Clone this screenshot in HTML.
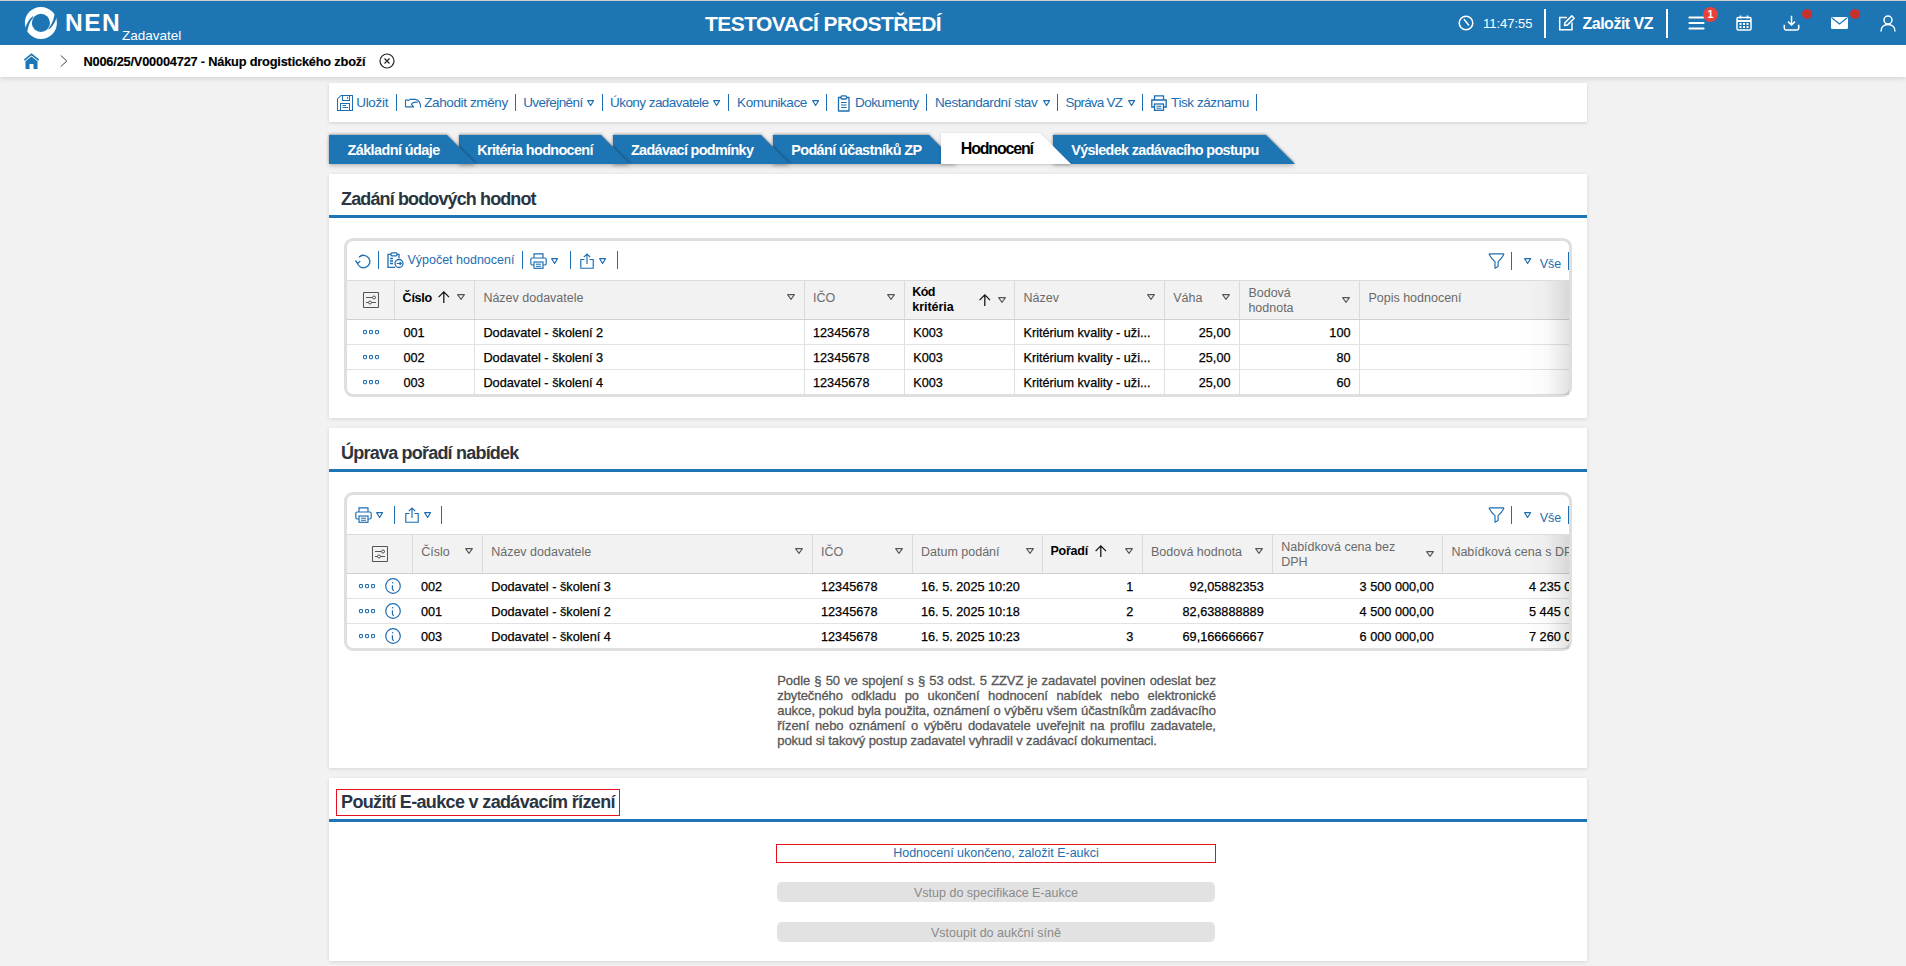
<!DOCTYPE html><html><head><meta charset="utf-8"><style>
html,body{margin:0;padding:0;}
body{width:1906px;height:966px;overflow:hidden;position:relative;background:#f2f2f2;font-family:"Liberation Sans", sans-serif;}
.t{position:absolute;white-space:nowrap;line-height:1;}
svg{overflow:visible}
</style></head><body>
<div style="position:absolute;left:0px;top:0px;width:1906px;height:1px;background:#cfcfcf"></div>
<div style="position:absolute;left:0px;top:1px;width:1906px;height:44px;background:#1e75b4"></div>
<svg style="position:absolute;left:20px;top:3px;" width="42" height="40" viewBox="0 0 42 40"><defs><mask id="m"><rect width="42" height="40" fill="#fff"/><circle cx="20.9" cy="19.9" r="9.1" fill="#000"/><path d="M12.8 13.3 Q7.5 17.5 5.2 25.3 L4.5 27.5 L7.2 28.5 L7.6 26.8 Q9 19.5 13.5 14.1Z" fill="#000"/><path d="M29 26.5 Q34.3 22.3 36.6 14.5 L37.3 12.3 L34.6 11.3 L34.2 13 Q32.8 20.3 28.3 25.7Z" fill="#000"/></mask></defs>
<circle cx="20.9" cy="19.9" r="16" fill="#fff" mask="url(#m)"/></svg>
<div class="t" style="left:65.0px;top:11.16px;font-size:24.5px;font-weight:700;color:#fff;letter-spacing:1.45px;">NEN</div>
<div class="t" style="left:122.0px;top:29.07px;font-size:13.5px;font-weight:400;color:#fff;letter-spacing:0px;">Zadavatel</div>
<div class="t" style="left:705.0px;top:12.72px;font-size:21px;font-weight:700;color:#fff;letter-spacing:-0.55px;">TESTOVACÍ PROSTŘEDÍ</div>
<svg style="position:absolute;left:1458px;top:15px;" width="16" height="16" viewBox="0 0 16 16"><circle cx="8" cy="8" r="6.8" fill="none" stroke="#fff" stroke-width="1.5"/><path d="M6.3 4.6L10.6 10" fill="none" stroke="#fff" stroke-width="1.5" stroke-linecap="round"/></svg>
<div class="t" style="left:1483.0px;top:16.80px;font-size:13px;font-weight:400;color:#fff;letter-spacing:-0.02px;">11:47:55</div>
<div style="position:absolute;left:1544px;top:9px;width:2px;height:29px;background:#fff"></div>
<svg style="position:absolute;left:1558px;top:15px;" width="17" height="16" viewBox="0 0 17 16"><path d="M9 2.5H1.7v12.3H14V7.5" fill="none" stroke="#fff" stroke-width="1.5"/><path d="M6.5 10.5l.4-2.8L13.8.9l2.4 2.4-6.9 6.8z" fill="none" stroke="#fff" stroke-width="1.5" stroke-linejoin="round"/></svg>
<div class="t" style="left:1582.5px;top:15.76px;font-size:16px;font-weight:700;color:#fff;letter-spacing:-0.5px;">Založit VZ</div>
<div style="position:absolute;left:1666px;top:9px;width:2px;height:29px;background:#fff"></div>
<svg style="position:absolute;left:1688px;top:16px;" width="17" height="14" viewBox="0 0 17 14"><g stroke="#fff" stroke-width="2.2" stroke-linecap="round"><path d="M1.5 1.5h14M1.5 7h14M1.5 12.5h14"/></g></svg>
<div style="position:absolute;left:1703px;top:7px;width:15px;height:15px;border-radius:50%;background:#e8413a;color:#fff;font-size:10.5px;font-weight:700;line-height:15px;text-align:center;font-family:&quot;Liberation Sans&quot;">1</div>
<svg style="position:absolute;left:1736px;top:15px;" width="16" height="16" viewBox="0 0 16 16"><rect x="1" y="2.5" width="14" height="12.5" rx="1.2" fill="none" stroke="#fff" stroke-width="1.5"/><path d="M1 6h14" stroke="#fff" stroke-width="2"/><path d="M4.5 0.5v3M11.5 0.5v3" stroke="#fff" stroke-width="1.5"/><g fill="#fff"><rect x="3.5" y="8" width="2" height="2"/><rect x="7" y="8" width="2" height="2"/><rect x="10.5" y="8" width="2" height="2"/><rect x="3.5" y="11" width="2" height="2"/><rect x="7" y="11" width="2" height="2"/><rect x="10.5" y="11" width="2" height="2"/></g></svg>
<svg style="position:absolute;left:1783px;top:15px;" width="17" height="16" viewBox="0 0 17 16"><path d="M1.3 9.8v3.4q0 1.7 1.7 1.7h11q1.7 0 1.7-1.7V9.8" fill="none" stroke="#fff" stroke-width="1.5"/><path d="M8.5 0.8v9M5 6.6l3.5 3.4L12 6.6" fill="none" stroke="#fff" stroke-width="1.5"/></svg>
<div style="position:absolute;left:1802px;top:9px;width:10px;height:10px;border-radius:50%;background:#c9302c"></div>
<svg style="position:absolute;left:1831px;top:17px;" width="17" height="12" viewBox="0 0 17 12"><rect x="0" y="0" width="17" height="12" rx="1.5" fill="#fff"/><path d="M1 1l7.5 6L16 1" fill="none" stroke="#1e75b4" stroke-width="1.3"/></svg>
<div style="position:absolute;left:1850px;top:9px;width:10px;height:10px;border-radius:50%;background:#c9302c"></div>
<svg style="position:absolute;left:1880px;top:15px;" width="16" height="17" viewBox="0 0 16 17"><circle cx="8" cy="5" r="4" fill="none" stroke="#fff" stroke-width="1.5"/><path d="M1 16.5c0-4.3 3-7 7-7s7 2.7 7 7" fill="none" stroke="#fff" stroke-width="1.5"/></svg>
<div style="position:absolute;left:0px;top:45px;width:1906px;height:32px;background:#fff;box-shadow:0 2px 5px rgba(0,0,0,0.12)"></div>
<svg style="position:absolute;left:23px;top:53px;" width="17" height="16" viewBox="0 0 17 16"><path d="M1.3 7.2L8.5 1.3l7.2 5.9" fill="none" stroke="#1e75b4" stroke-width="1.6"/><path d="M2.5 8.3L8.5 3.6l6 4.7V16H10.5v-5H6.5v5H2.5z" fill="#1e75b4"/></svg>
<svg style="position:absolute;left:60px;top:55px;" width="8" height="12" viewBox="0 0 8 12"><path d="M0.8 0.5L6.8 6 0.8 11.5" fill="none" stroke="#444" stroke-width="1"/></svg>
<div class="t" style="left:83.5px;top:55.66px;font-size:12.8px;font-weight:700;color:#000;letter-spacing:-0.202px;-webkit-text-stroke:0.15px #000">N006/25/V00004727 - Nákup drogistického zboží</div>
<svg style="position:absolute;left:379px;top:53px;" width="16" height="16" viewBox="0 0 16 16"><circle cx="8" cy="8" r="7" fill="none" stroke="#222" stroke-width="1.2"/><path d="M5.5 5.5l5 5M10.5 5.5l-5 5" stroke="#222" stroke-width="1.2"/></svg>
<div style="position:absolute;left:329px;top:83px;width:1258px;height:39px;background:#fff;box-shadow:0 1px 3px rgba(0,0,0,0.15)"></div>
<svg style="position:absolute;left:337px;top:95px;" width="16" height="16" viewBox="0 0 16 16"><g fill="none" stroke="#1d6db0" stroke-width="1.05" stroke-linejoin="round"><path d="M0.5 4L4 0.5H15.5V15.5H0.5Z"/><path d="M5.5 0.5V5.5H12.5V0.5"/><path d="M10.5 1.8V3.6"/><path d="M3.5 15.5V8.5H12.5V15.5"/><path d="M5.5 10.5H9M5.5 12.5H11"/></g></svg>
<div class="t" style="left:356.2px;top:95.87px;font-size:13.5px;font-weight:400;color:#1d6db0;letter-spacing:-0.293px;">Uložit</div>
<div style="position:absolute;left:396px;top:94px;width:1px;height:17px;background:#1d6db0"></div>
<svg style="position:absolute;left:400px;top:92px;" width="24" height="22" viewBox="0 0 24 22"><path d="M5.6 7.4 L8.2 8.6 L9.8 7.4 H15.5 C18.6 7.9 20.6 11.3 20.6 15.6 M17.8 10.3 C16 10.1 14.2 10.2 13 10.7 L11.4 12.4 L13.6 14.9 H6.2 Q5.5 14.9 5.5 14.2 V7.9" fill="none" stroke="#1d6db0" stroke-width="1.15" stroke-linejoin="round"/></svg>
<div class="t" style="left:424.2px;top:95.87px;font-size:13.5px;font-weight:400;color:#1d6db0;letter-spacing:-0.379px;">Zahodit změny</div>
<div style="position:absolute;left:515px;top:94px;width:1px;height:17px;background:#1d6db0"></div>
<div class="t" style="left:523.2px;top:95.87px;font-size:13.5px;font-weight:400;color:#1d6db0;letter-spacing:-0.589px;">Uveřejnění</div>
<svg style="position:absolute;left:587px;top:99.8px;" width="7.2" height="6.2" viewBox="0 0 7.2 6.2"><path d="M0.6 0.6H6.6000000000000005L3.6 5.6000000000000005z" fill="none" stroke="#1d6db0" stroke-width="1.1" stroke-linejoin="round"/></svg>
<div style="position:absolute;left:602px;top:94px;width:1px;height:17px;background:#1d6db0"></div>
<div class="t" style="left:610.0px;top:95.87px;font-size:13.5px;font-weight:400;color:#1d6db0;letter-spacing:-0.555px;">Úkony zadavatele</div>
<svg style="position:absolute;left:713px;top:99.8px;" width="7.2" height="6.2" viewBox="0 0 7.2 6.2"><path d="M0.6 0.6H6.6000000000000005L3.6 5.6000000000000005z" fill="none" stroke="#1d6db0" stroke-width="1.1" stroke-linejoin="round"/></svg>
<div style="position:absolute;left:728px;top:94px;width:1px;height:17px;background:#1d6db0"></div>
<div class="t" style="left:737.1px;top:95.87px;font-size:13.5px;font-weight:400;color:#1d6db0;letter-spacing:-0.466px;">Komunikace</div>
<svg style="position:absolute;left:811.7px;top:99.8px;" width="7.2" height="6.2" viewBox="0 0 7.2 6.2"><path d="M0.6 0.6H6.6000000000000005L3.6 5.6000000000000005z" fill="none" stroke="#1d6db0" stroke-width="1.1" stroke-linejoin="round"/></svg>
<div style="position:absolute;left:826px;top:94px;width:1px;height:17px;background:#1d6db0"></div>
<svg style="position:absolute;left:837px;top:95px;" width="14" height="17" viewBox="0 0 14 17"><path d="M4 2.5H1.5v13.5h10.5v-13.5H9.5" fill="none" stroke="#1d6db0" stroke-width="1.3" stroke-linejoin="round"/><rect x="4" y="0.8" width="5.5" height="3.2" rx="1" fill="none" stroke="#1d6db0" stroke-width="1.3"/><path d="M4 7.5h5.5M4 10h5.5M4 12.5h5.5" stroke="#1d6db0" stroke-width="1.2"/></svg>
<div class="t" style="left:854.9px;top:95.87px;font-size:13.5px;font-weight:400;color:#1d6db0;letter-spacing:-0.51px;">Dokumenty</div>
<div style="position:absolute;left:926px;top:94px;width:1px;height:17px;background:#1d6db0"></div>
<div class="t" style="left:935.0px;top:95.87px;font-size:13.5px;font-weight:400;color:#1d6db0;letter-spacing:-0.429px;">Nestandardní stav</div>
<svg style="position:absolute;left:1042.6px;top:99.8px;" width="7.2" height="6.2" viewBox="0 0 7.2 6.2"><path d="M0.6 0.6H6.6000000000000005L3.6 5.6000000000000005z" fill="none" stroke="#1d6db0" stroke-width="1.1" stroke-linejoin="round"/></svg>
<div style="position:absolute;left:1057px;top:94px;width:1px;height:17px;background:#1d6db0"></div>
<div class="t" style="left:1065.6px;top:95.87px;font-size:13.5px;font-weight:400;color:#1d6db0;letter-spacing:-0.81px;">Správa VZ</div>
<svg style="position:absolute;left:1127.5px;top:99.8px;" width="7.2" height="6.2" viewBox="0 0 7.2 6.2"><path d="M0.6 0.6H6.6000000000000005L3.6 5.6000000000000005z" fill="none" stroke="#1d6db0" stroke-width="1.1" stroke-linejoin="round"/></svg>
<div style="position:absolute;left:1142px;top:94px;width:1px;height:17px;background:#1d6db0"></div>
<svg style="position:absolute;left:1151px;top:95px;" width="16" height="16" viewBox="0 0 16 16"><path d="M3.5 5V0.8h9V5M3.5 12H0.8V5h14.4v7h-2.7" fill="none" stroke="#1d6db0" stroke-width="1.3"/><rect x="3.5" y="9" width="9" height="6.3" fill="#fff" stroke="#1d6db0" stroke-width="1.3"/><path d="M5.5 11.2h5M5.5 13.3h5" stroke="#1d6db0" stroke-width="1.1"/></svg>
<div class="t" style="left:1171.1px;top:95.87px;font-size:13.5px;font-weight:400;color:#1d6db0;letter-spacing:-0.426px;">Tisk záznamu</div>
<div style="position:absolute;left:1256px;top:94px;width:1px;height:17px;background:#1d6db0"></div>
<svg style="position:absolute;left:329px;top:134px;z-index:20;filter:drop-shadow(0.5px 2px 2px rgba(0,0,0,0.18)) drop-shadow(0 -1px 0.8px rgba(0,0,0,0.3))" width="149" height="31"><path d="M0 1H118L147 30H0z" fill="#1e75b4"/></svg>
<div class="t" style="left:347.5px;top:142.61px;font-size:14.4px;font-weight:700;color:#fff;letter-spacing:-0.559px;z-index:30">Základní údaje</div>
<svg style="position:absolute;left:459px;top:134px;z-index:19;filter:drop-shadow(0.5px 2px 2px rgba(0,0,0,0.18)) drop-shadow(0 -1px 0.8px rgba(0,0,0,0.3))" width="173" height="31"><path d="M0 1H142L171 30H0z" fill="#1e75b4"/></svg>
<div class="t" style="left:477.2px;top:142.61px;font-size:14.4px;font-weight:700;color:#fff;letter-spacing:-0.638px;z-index:30">Kritéria hodnocení</div>
<svg style="position:absolute;left:613px;top:134px;z-index:18;filter:drop-shadow(0.5px 2px 2px rgba(0,0,0,0.18)) drop-shadow(0 -1px 0.8px rgba(0,0,0,0.3))" width="179" height="31"><path d="M0 1H148L177 30H0z" fill="#1e75b4"/></svg>
<div class="t" style="left:631.0px;top:142.61px;font-size:14.4px;font-weight:700;color:#fff;letter-spacing:-0.666px;z-index:30">Zadávací podmínky</div>
<svg style="position:absolute;left:773px;top:134px;z-index:17;filter:drop-shadow(0.5px 2px 2px rgba(0,0,0,0.18)) drop-shadow(0 -1px 0.8px rgba(0,0,0,0.3))" width="187" height="31"><path d="M0 1H156L185 30H0z" fill="#1e75b4"/></svg>
<div class="t" style="left:791.2px;top:142.61px;font-size:14.4px;font-weight:700;color:#fff;letter-spacing:-0.586px;z-index:30">Podání účastníků ZP</div>
<svg style="position:absolute;left:1053px;top:134px;z-index:15;filter:drop-shadow(0.5px 2px 2px rgba(0,0,0,0.18)) drop-shadow(0 -1px 0.8px rgba(0,0,0,0.3))" width="244" height="31"><path d="M0 1H213L242 30H0z" fill="#1e75b4"/></svg>
<div class="t" style="left:1071.2px;top:142.61px;font-size:14.4px;font-weight:700;color:#fff;letter-spacing:-0.644px;z-index:30">Výsledek zadávacího postupu</div>
<svg style="position:absolute;left:941px;top:133px;z-index:25;filter:drop-shadow(0.5px 1px 1.5px rgba(0,0,0,0.18))" width="132" height="32"><path d="M0 0H99L130 31H0z" fill="#fff"/></svg>
<div class="t" style="left:960.8px;top:140.56px;font-size:16px;font-weight:700;color:#000;letter-spacing:-1.184px;z-index:30">Hodnocení</div>
<div style="position:absolute;left:329px;top:174px;width:1258px;height:244px;background:#fff;box-shadow:0 1px 4px rgba(0,0,0,0.12)"></div>
<div class="t" style="left:341.1px;top:189.56px;font-size:18px;font-weight:700;color:#2b3441;letter-spacing:-0.881px;">Zadání bodových hodnot</div>
<div style="position:absolute;left:329px;top:215px;width:1258px;height:3px;background:#1e75b4"></div>
<div style="position:absolute;left:329px;top:428px;width:1258px;height:340px;background:#fff;box-shadow:0 1px 4px rgba(0,0,0,0.12)"></div>
<div class="t" style="left:341.1px;top:443.56px;font-size:18px;font-weight:700;color:#2b3441;letter-spacing:-0.793px;">Úprava pořadí nabídek</div>
<div style="position:absolute;left:329px;top:469px;width:1258px;height:3px;background:#1e75b4"></div>
<div style="position:absolute;left:329px;top:778px;width:1258px;height:183px;background:#fff;box-shadow:0 1px 4px rgba(0,0,0,0.12)"></div>
<div class="t" style="left:341.1px;top:793.46px;font-size:18px;font-weight:700;color:#2b3441;letter-spacing:-0.658px;">Použití E-aukce v zadávacím řízení</div>
<div style="position:absolute;left:329px;top:819px;width:1258px;height:3px;background:#1e75b4"></div>
<div style="position:absolute;left:336px;top:789px;width:284px;height:27px;border:1px solid #e8101e;box-sizing:border-box"></div>
<div style="position:absolute;left:344px;top:238px;width:1228px;height:159px;border:3px solid #dedfe0;border-radius:9px;box-sizing:border-box;background:#fff"></div>
<svg style="position:absolute;left:355px;top:254px;" width="17" height="15" viewBox="0 0 17 15"><path d="M4 3.2A6.3 6.3 0 1 1 2.3 8.5" fill="none" stroke="#1d6db0" stroke-width="1.3"/><path d="M0.5 6.5l2 2.8 2.8-2" fill="none" stroke="#1d6db0" stroke-width="1.3"/></svg>
<div style="position:absolute;left:378px;top:251px;width:1px;height:18px;background:#1d6db0"></div>
<svg style="position:absolute;left:387px;top:252px;" width="17" height="16" viewBox="0 0 17 16"><path d="M4 2.3H1v13h7" fill="none" stroke="#1d6db0" stroke-width="1.3"/><path d="M10 2.3h2v4" fill="none" stroke="#1d6db0" stroke-width="1.3"/><rect x="4" y="0.8" width="6" height="3" rx="1" fill="none" stroke="#1d6db0" stroke-width="1.3"/><path d="M3 6.5h3M3 9h3M3 11.5h3" stroke="#1d6db0" stroke-width="1.4"/><circle cx="12" cy="11.5" r="4" fill="#fff" stroke="#1d6db0" stroke-width="1.3"/><path d="M9.8 11.5h4.4M12.6 9.8l1.7 1.7-1.7 1.7" fill="none" stroke="#1d6db0" stroke-width="1.1"/></svg>
<div class="t" style="left:407.4px;top:254.42px;font-size:12.5px;font-weight:400;color:#1d6db0;letter-spacing:0px;">Výpočet hodnocení</div>
<div style="position:absolute;left:522px;top:251px;width:1px;height:18px;background:#1d6db0"></div>
<svg style="position:absolute;left:530px;top:253px;" width="17" height="16" viewBox="0 0 17 16"><path d="M4 5V0.8h9V5M4 12H2.2Q0.8 12 0.8 10.6V6.4Q0.8 5 2.2 5h12.6q1.4 0 1.4 1.4v4.2q0 1.4-1.4 1.4H13" fill="none" stroke="#1d6db0" stroke-width="1.15"/><rect x="4" y="9" width="9" height="6.3" fill="#fff" stroke="#1d6db0" stroke-width="1.15"/><path d="M6 11.2h5M6 13.3h5" stroke="#1d6db0" stroke-width="1"/></svg>
<svg style="position:absolute;left:551px;top:257.5px;" width="7.2" height="6.2" viewBox="0 0 7.2 6.2"><path d="M0.6 0.6H6.6000000000000005L3.6 5.6000000000000005z" fill="none" stroke="#1d6db0" stroke-width="1.1" stroke-linejoin="round"/></svg>
<div style="position:absolute;left:570px;top:251px;width:1px;height:18px;background:#1d6db0"></div>
<svg style="position:absolute;left:580px;top:252.5px;" width="14" height="16" viewBox="0 0 14 16"><path d="M4.5 6.5H0.8v8.7h12.4V6.5H9.5" fill="none" stroke="#1d6db0" stroke-width="1.15"/><path d="M7 11V1M3.8 4.2L7 1l3.2 3.2" fill="none" stroke="#1d6db0" stroke-width="1.15"/></svg>
<svg style="position:absolute;left:599px;top:257.5px;" width="7.2" height="6.2" viewBox="0 0 7.2 6.2"><path d="M0.6 0.6H6.6000000000000005L3.6 5.6000000000000005z" fill="none" stroke="#1d6db0" stroke-width="1.1" stroke-linejoin="round"/></svg>
<div style="position:absolute;left:617px;top:251px;width:1px;height:18px;background:#1d6db0"></div>
<svg style="position:absolute;left:1488px;top:252.5px;" width="17" height="16" viewBox="0 0 17 16"><path d="M1.2 1.6Q1.2 0.8 2 0.8H15Q15.8 0.8 15.8 1.6Q13.8 5.6 10.1 8.6V13.6L7 15.2V8.6Q3.2 5.6 1.2 1.6Z" fill="none" stroke="#1d6db0" stroke-width="1.15" stroke-linejoin="round"/></svg>
<div style="position:absolute;left:1511px;top:252px;width:1px;height:18px;background:#1d6db0"></div>
<svg style="position:absolute;left:1524px;top:257.7px;" width="7.2" height="6.2" viewBox="0 0 7.2 6.2"><path d="M0.6 0.6H6.6000000000000005L3.6 5.6000000000000005z" fill="none" stroke="#1d6db0" stroke-width="1.1" stroke-linejoin="round"/></svg>
<div class="t" style="left:1539.7px;top:258.42px;font-size:12.5px;font-weight:400;color:#1d6db0;letter-spacing:0px;">Vše</div>
<div style="position:absolute;left:1568px;top:252px;width:1px;height:18px;background:#1d6db0"></div>
<div style="position:absolute;left:347px;top:280px;width:1222px;height:1px;background:#dcdcdc"></div>
<div style="position:absolute;left:347px;top:281px;width:1222px;height:38px;background:#f2f2f2"></div>
<div style="position:absolute;left:347px;top:319px;width:1222px;height:1px;background:#d0d0d0"></div>
<div style="position:absolute;left:394px;top:281px;width:1px;height:38px;background:#dadada"></div>
<div style="position:absolute;left:474px;top:281px;width:1px;height:38px;background:#dadada"></div>
<div style="position:absolute;left:474px;top:320px;width:1px;height:75px;background:#e0e0e0"></div>
<div style="position:absolute;left:804px;top:281px;width:1px;height:38px;background:#dadada"></div>
<div style="position:absolute;left:804px;top:320px;width:1px;height:75px;background:#e0e0e0"></div>
<div style="position:absolute;left:904px;top:281px;width:1px;height:38px;background:#dadada"></div>
<div style="position:absolute;left:904px;top:320px;width:1px;height:75px;background:#e0e0e0"></div>
<div style="position:absolute;left:1014px;top:281px;width:1px;height:38px;background:#dadada"></div>
<div style="position:absolute;left:1014px;top:320px;width:1px;height:75px;background:#e0e0e0"></div>
<div style="position:absolute;left:1164px;top:281px;width:1px;height:38px;background:#dadada"></div>
<div style="position:absolute;left:1164px;top:320px;width:1px;height:75px;background:#e0e0e0"></div>
<div style="position:absolute;left:1239px;top:281px;width:1px;height:38px;background:#dadada"></div>
<div style="position:absolute;left:1239px;top:320px;width:1px;height:75px;background:#e0e0e0"></div>
<div style="position:absolute;left:1359px;top:281px;width:1px;height:38px;background:#dadada"></div>
<div style="position:absolute;left:1359px;top:320px;width:1px;height:75px;background:#e0e0e0"></div>
<div style="position:absolute;left:347px;top:344px;width:1222px;height:1px;background:#e2e2e2"></div>
<div style="position:absolute;left:347px;top:369px;width:1222px;height:1px;background:#e2e2e2"></div>
<svg style="position:absolute;left:363px;top:292px;" width="16" height="16" viewBox="0 0 16 16"><rect x="0.5" y="0.5" width="15" height="15" rx="0.6" fill="none" stroke="#555" stroke-width="1.05"/><path d="M3 5.5H9.5M12.5 5.5H13M3 10.5H5.5M8.5 10.5H13" stroke="#555" stroke-width="1"/><circle cx="11" cy="5.5" r="1.5" fill="none" stroke="#555" stroke-width="1"/><circle cx="7" cy="10.5" r="1.5" fill="none" stroke="#555" stroke-width="1"/></svg>
<div class="t" style="left:402.6px;top:292.32px;font-size:12.5px;font-weight:700;color:#000;letter-spacing:-0.241px;">Číslo</div>
<svg style="position:absolute;left:437.5px;top:291px;" width="12" height="12" viewBox="0 0 12 12"><path d="M5.8 12V0.9M0.6 6.1l5.2-5.2 5.2 5.2" fill="none" stroke="#111" stroke-width="1.25"/></svg>
<svg style="position:absolute;left:457px;top:294px;" width="8" height="6" viewBox="0 0 8 6"><path d="M0.6 0.6H7.4L4 5.4z" fill="none" stroke="#555" stroke-width="1.05" stroke-linejoin="round"/></svg>
<div class="t" style="left:483.4px;top:291.62px;font-size:12.5px;font-weight:400;color:#6a6a6a;letter-spacing:0px;">Název dodavatele</div>
<svg style="position:absolute;left:787px;top:294px;" width="8" height="6" viewBox="0 0 8 6"><path d="M0.6 0.6H7.4L4 5.4z" fill="none" stroke="#555" stroke-width="1.05" stroke-linejoin="round"/></svg>
<div class="t" style="left:813.0px;top:291.62px;font-size:12.5px;font-weight:400;color:#6a6a6a;letter-spacing:0px;">IČO</div>
<svg style="position:absolute;left:887px;top:294px;" width="8" height="6" viewBox="0 0 8 6"><path d="M0.6 0.6H7.4L4 5.4z" fill="none" stroke="#555" stroke-width="1.05" stroke-linejoin="round"/></svg>
<div class="t" style="left:912.3px;top:286.42px;font-size:12.5px;font-weight:700;color:#000;letter-spacing:-0.556px;">Kód</div>
<div class="t" style="left:912.3px;top:301.42px;font-size:12.5px;font-weight:700;color:#000;letter-spacing:-0.043px;">kritéria</div>
<svg style="position:absolute;left:979.4px;top:293.8px;" width="12" height="12" viewBox="0 0 12 12"><path d="M5.8 12V0.9M0.6 6.1l5.2-5.2 5.2 5.2" fill="none" stroke="#111" stroke-width="1.25"/></svg>
<svg style="position:absolute;left:997.9px;top:297.1px;" width="8" height="6" viewBox="0 0 8 6"><path d="M0.6 0.6H7.4L4 5.4z" fill="none" stroke="#555" stroke-width="1.05" stroke-linejoin="round"/></svg>
<div class="t" style="left:1023.5px;top:291.62px;font-size:12.5px;font-weight:400;color:#6a6a6a;letter-spacing:0px;">Název</div>
<svg style="position:absolute;left:1147px;top:294px;" width="8" height="6" viewBox="0 0 8 6"><path d="M0.6 0.6H7.4L4 5.4z" fill="none" stroke="#555" stroke-width="1.05" stroke-linejoin="round"/></svg>
<div class="t" style="left:1173.2px;top:291.62px;font-size:12.5px;font-weight:400;color:#6a6a6a;letter-spacing:0px;">Váha</div>
<svg style="position:absolute;left:1222px;top:294px;" width="8" height="6" viewBox="0 0 8 6"><path d="M0.6 0.6H7.4L4 5.4z" fill="none" stroke="#555" stroke-width="1.05" stroke-linejoin="round"/></svg>
<div class="t" style="left:1248.4px;top:287.42px;font-size:12.5px;font-weight:400;color:#6a6a6a;letter-spacing:0px;">Bodová</div>
<div class="t" style="left:1248.4px;top:302.42px;font-size:12.5px;font-weight:400;color:#6a6a6a;letter-spacing:0px;">hodnota</div>
<svg style="position:absolute;left:1342.4px;top:297px;" width="8" height="6" viewBox="0 0 8 6"><path d="M0.6 0.6H7.4L4 5.4z" fill="none" stroke="#555" stroke-width="1.05" stroke-linejoin="round"/></svg>
<div class="t" style="left:1368.4px;top:291.62px;font-size:12.5px;font-weight:400;color:#6a6a6a;letter-spacing:0px;">Popis hodnocení</div>
<svg style="position:absolute;left:363px;top:330px;" width="17" height="5" viewBox="0 0 17 5"><rect x="0.5" y="0.5" width="3" height="3.2" rx="0.9" fill="none" stroke="#1d6db0" stroke-width="1.05"/><rect x="6.5" y="0.5" width="3" height="3.2" rx="0.9" fill="none" stroke="#1d6db0" stroke-width="1.05"/><rect x="12.5" y="0.5" width="3" height="3.2" rx="0.9" fill="none" stroke="#1d6db0" stroke-width="1.05"/></svg>
<div class="t" style="left:403.4px;top:326.65px;font-size:12.7px;font-weight:400;color:#000;letter-spacing:0px;-webkit-text-stroke:0.25px #000">001</div>
<div class="t" style="left:483.4px;top:326.61px;font-size:12.75px;font-weight:400;color:#000;letter-spacing:0px;-webkit-text-stroke:0.25px #000">Dodavatel - školení 2</div>
<div class="t" style="left:813.0px;top:326.65px;font-size:12.7px;font-weight:400;color:#000;letter-spacing:0px;-webkit-text-stroke:0.25px #000">12345678</div>
<div class="t" style="left:913.3px;top:326.65px;font-size:12.7px;font-weight:400;color:#000;letter-spacing:0px;-webkit-text-stroke:0.25px #000">K003</div>
<div class="t" style="left:1023.5px;top:326.71px;font-size:12.63px;font-weight:400;color:#000;letter-spacing:0px;-webkit-text-stroke:0.25px #000">Kritérium kvality - uži...</div>
<div class="t" style="right:675.5px;top:326.65px;font-size:12.7px;font-weight:400;color:#000;letter-spacing:0px;-webkit-text-stroke:0.25px #000">25,00</div>
<div class="t" style="right:555.5px;top:326.65px;font-size:12.7px;font-weight:400;color:#000;letter-spacing:0px;-webkit-text-stroke:0.25px #000">100</div>
<svg style="position:absolute;left:363px;top:355px;" width="17" height="5" viewBox="0 0 17 5"><rect x="0.5" y="0.5" width="3" height="3.2" rx="0.9" fill="none" stroke="#1d6db0" stroke-width="1.05"/><rect x="6.5" y="0.5" width="3" height="3.2" rx="0.9" fill="none" stroke="#1d6db0" stroke-width="1.05"/><rect x="12.5" y="0.5" width="3" height="3.2" rx="0.9" fill="none" stroke="#1d6db0" stroke-width="1.05"/></svg>
<div class="t" style="left:403.4px;top:351.65px;font-size:12.7px;font-weight:400;color:#000;letter-spacing:0px;-webkit-text-stroke:0.25px #000">002</div>
<div class="t" style="left:483.4px;top:351.61px;font-size:12.75px;font-weight:400;color:#000;letter-spacing:0px;-webkit-text-stroke:0.25px #000">Dodavatel - školení 3</div>
<div class="t" style="left:813.0px;top:351.65px;font-size:12.7px;font-weight:400;color:#000;letter-spacing:0px;-webkit-text-stroke:0.25px #000">12345678</div>
<div class="t" style="left:913.3px;top:351.65px;font-size:12.7px;font-weight:400;color:#000;letter-spacing:0px;-webkit-text-stroke:0.25px #000">K003</div>
<div class="t" style="left:1023.5px;top:351.71px;font-size:12.63px;font-weight:400;color:#000;letter-spacing:0px;-webkit-text-stroke:0.25px #000">Kritérium kvality - uži...</div>
<div class="t" style="right:675.5px;top:351.65px;font-size:12.7px;font-weight:400;color:#000;letter-spacing:0px;-webkit-text-stroke:0.25px #000">25,00</div>
<div class="t" style="right:555.5px;top:351.65px;font-size:12.7px;font-weight:400;color:#000;letter-spacing:0px;-webkit-text-stroke:0.25px #000">80</div>
<svg style="position:absolute;left:363px;top:380px;" width="17" height="5" viewBox="0 0 17 5"><rect x="0.5" y="0.5" width="3" height="3.2" rx="0.9" fill="none" stroke="#1d6db0" stroke-width="1.05"/><rect x="6.5" y="0.5" width="3" height="3.2" rx="0.9" fill="none" stroke="#1d6db0" stroke-width="1.05"/><rect x="12.5" y="0.5" width="3" height="3.2" rx="0.9" fill="none" stroke="#1d6db0" stroke-width="1.05"/></svg>
<div class="t" style="left:403.4px;top:376.65px;font-size:12.7px;font-weight:400;color:#000;letter-spacing:0px;-webkit-text-stroke:0.25px #000">003</div>
<div class="t" style="left:483.4px;top:376.61px;font-size:12.75px;font-weight:400;color:#000;letter-spacing:0px;-webkit-text-stroke:0.25px #000">Dodavatel - školení 4</div>
<div class="t" style="left:813.0px;top:376.65px;font-size:12.7px;font-weight:400;color:#000;letter-spacing:0px;-webkit-text-stroke:0.25px #000">12345678</div>
<div class="t" style="left:913.3px;top:376.65px;font-size:12.7px;font-weight:400;color:#000;letter-spacing:0px;-webkit-text-stroke:0.25px #000">K003</div>
<div class="t" style="left:1023.5px;top:376.71px;font-size:12.63px;font-weight:400;color:#000;letter-spacing:0px;-webkit-text-stroke:0.25px #000">Kritérium kvality - uži...</div>
<div class="t" style="right:675.5px;top:376.65px;font-size:12.7px;font-weight:400;color:#000;letter-spacing:0px;-webkit-text-stroke:0.25px #000">25,00</div>
<div class="t" style="right:555.5px;top:376.65px;font-size:12.7px;font-weight:400;color:#000;letter-spacing:0px;-webkit-text-stroke:0.25px #000">60</div>
<div style="position:absolute;left:1523px;top:281px;width:46px;height:114px;background:linear-gradient(to right, rgba(0,0,0,0), rgba(0,0,0,0.02) 50%, rgba(0,0,0,0.11))"></div>
<div style="position:absolute;left:344px;top:492px;width:1228px;height:159px;border:3px solid #dedfe0;border-radius:9px;box-sizing:border-box;background:#fff"></div>
<svg style="position:absolute;left:355px;top:507px;" width="17" height="16" viewBox="0 0 17 16"><path d="M4 5V0.8h9V5M4 12H2.2Q0.8 12 0.8 10.6V6.4Q0.8 5 2.2 5h12.6q1.4 0 1.4 1.4v4.2q0 1.4-1.4 1.4H13" fill="none" stroke="#1d6db0" stroke-width="1.15"/><rect x="4" y="9" width="9" height="6.3" fill="#fff" stroke="#1d6db0" stroke-width="1.15"/><path d="M6 11.2h5M6 13.3h5" stroke="#1d6db0" stroke-width="1"/></svg>
<svg style="position:absolute;left:375.5px;top:511.5px;" width="7.2" height="6.2" viewBox="0 0 7.2 6.2"><path d="M0.6 0.6H6.6000000000000005L3.6 5.6000000000000005z" fill="none" stroke="#1d6db0" stroke-width="1.1" stroke-linejoin="round"/></svg>
<div style="position:absolute;left:394px;top:506px;width:1px;height:18px;background:#1d6db0"></div>
<svg style="position:absolute;left:404.5px;top:507px;" width="14" height="16" viewBox="0 0 14 16"><path d="M4.5 6.5H0.8v8.7h12.4V6.5H9.5" fill="none" stroke="#1d6db0" stroke-width="1.15"/><path d="M7 11V1M3.8 4.2L7 1l3.2 3.2" fill="none" stroke="#1d6db0" stroke-width="1.15"/></svg>
<svg style="position:absolute;left:423.5px;top:511.5px;" width="7.2" height="6.2" viewBox="0 0 7.2 6.2"><path d="M0.6 0.6H6.6000000000000005L3.6 5.6000000000000005z" fill="none" stroke="#1d6db0" stroke-width="1.1" stroke-linejoin="round"/></svg>
<div style="position:absolute;left:441px;top:506px;width:1px;height:18px;background:#1d6db0"></div>
<svg style="position:absolute;left:1488px;top:506.5px;" width="17" height="16" viewBox="0 0 17 16"><path d="M1.2 1.6Q1.2 0.8 2 0.8H15Q15.8 0.8 15.8 1.6Q13.8 5.6 10.1 8.6V13.6L7 15.2V8.6Q3.2 5.6 1.2 1.6Z" fill="none" stroke="#1d6db0" stroke-width="1.15" stroke-linejoin="round"/></svg>
<div style="position:absolute;left:1511px;top:506px;width:1px;height:18px;background:#1d6db0"></div>
<svg style="position:absolute;left:1524px;top:511.7px;" width="7.2" height="6.2" viewBox="0 0 7.2 6.2"><path d="M0.6 0.6H6.6000000000000005L3.6 5.6000000000000005z" fill="none" stroke="#1d6db0" stroke-width="1.1" stroke-linejoin="round"/></svg>
<div class="t" style="left:1539.7px;top:512.42px;font-size:12.5px;font-weight:400;color:#1d6db0;letter-spacing:0px;">Vše</div>
<div style="position:absolute;left:1568px;top:506px;width:1px;height:18px;background:#1d6db0"></div>
<div style="position:absolute;left:347px;top:534px;width:1222px;height:1px;background:#dcdcdc"></div>
<div style="position:absolute;left:347px;top:535px;width:1222px;height:38px;background:#f2f2f2"></div>
<div style="position:absolute;left:347px;top:573px;width:1222px;height:1px;background:#d0d0d0"></div>
<div style="position:absolute;left:412px;top:535px;width:1px;height:38px;background:#dadada"></div>
<div style="position:absolute;left:482px;top:535px;width:1px;height:38px;background:#dadada"></div>
<div style="position:absolute;left:812px;top:535px;width:1px;height:38px;background:#dadada"></div>
<div style="position:absolute;left:912px;top:535px;width:1px;height:38px;background:#dadada"></div>
<div style="position:absolute;left:1042px;top:535px;width:1px;height:38px;background:#dadada"></div>
<div style="position:absolute;left:1142px;top:535px;width:1px;height:38px;background:#dadada"></div>
<div style="position:absolute;left:1272px;top:535px;width:1px;height:38px;background:#dadada"></div>
<div style="position:absolute;left:1442px;top:535px;width:1px;height:38px;background:#dadada"></div>
<div style="position:absolute;left:347px;top:598px;width:1222px;height:1px;background:#e2e2e2"></div>
<div style="position:absolute;left:347px;top:623px;width:1222px;height:1px;background:#e2e2e2"></div>
<svg style="position:absolute;left:372px;top:546px;" width="16" height="16" viewBox="0 0 16 16"><rect x="0.5" y="0.5" width="15" height="15" rx="0.6" fill="none" stroke="#555" stroke-width="1.05"/><path d="M3 5.5H9.5M12.5 5.5H13M3 10.5H5.5M8.5 10.5H13" stroke="#555" stroke-width="1"/><circle cx="11" cy="5.5" r="1.5" fill="none" stroke="#555" stroke-width="1"/><circle cx="7" cy="10.5" r="1.5" fill="none" stroke="#555" stroke-width="1"/></svg>
<div class="t" style="left:421.2px;top:545.62px;font-size:12.5px;font-weight:400;color:#6a6a6a;letter-spacing:0px;">Číslo</div>
<svg style="position:absolute;left:465px;top:548px;" width="8" height="6" viewBox="0 0 8 6"><path d="M0.6 0.6H7.4L4 5.4z" fill="none" stroke="#555" stroke-width="1.05" stroke-linejoin="round"/></svg>
<div class="t" style="left:491.2px;top:545.62px;font-size:12.5px;font-weight:400;color:#6a6a6a;letter-spacing:0px;">Název dodavatele</div>
<svg style="position:absolute;left:795px;top:548px;" width="8" height="6" viewBox="0 0 8 6"><path d="M0.6 0.6H7.4L4 5.4z" fill="none" stroke="#555" stroke-width="1.05" stroke-linejoin="round"/></svg>
<div class="t" style="left:821.0px;top:545.62px;font-size:12.5px;font-weight:400;color:#6a6a6a;letter-spacing:0px;">IČO</div>
<svg style="position:absolute;left:895.4px;top:548px;" width="8" height="6" viewBox="0 0 8 6"><path d="M0.6 0.6H7.4L4 5.4z" fill="none" stroke="#555" stroke-width="1.05" stroke-linejoin="round"/></svg>
<div class="t" style="left:921.0px;top:545.62px;font-size:12.5px;font-weight:400;color:#6a6a6a;letter-spacing:0px;">Datum podání</div>
<svg style="position:absolute;left:1025.5px;top:548px;" width="8" height="6" viewBox="0 0 8 6"><path d="M0.6 0.6H7.4L4 5.4z" fill="none" stroke="#555" stroke-width="1.05" stroke-linejoin="round"/></svg>
<div class="t" style="left:1050.5px;top:545.22px;font-size:12.5px;font-weight:700;color:#000;letter-spacing:-0.241px;">Pořadí</div>
<svg style="position:absolute;left:1094.6px;top:544.8px;" width="12" height="12" viewBox="0 0 12 12"><path d="M5.8 12V0.9M0.6 6.1l5.2-5.2 5.2 5.2" fill="none" stroke="#111" stroke-width="1.25"/></svg>
<svg style="position:absolute;left:1125px;top:548px;" width="8" height="6" viewBox="0 0 8 6"><path d="M0.6 0.6H7.4L4 5.4z" fill="none" stroke="#555" stroke-width="1.05" stroke-linejoin="round"/></svg>
<div class="t" style="left:1151.0px;top:545.62px;font-size:12.5px;font-weight:400;color:#6a6a6a;letter-spacing:0px;">Bodová hodnota</div>
<svg style="position:absolute;left:1255.4px;top:548px;" width="8" height="6" viewBox="0 0 8 6"><path d="M0.6 0.6H7.4L4 5.4z" fill="none" stroke="#555" stroke-width="1.05" stroke-linejoin="round"/></svg>
<div class="t" style="left:1281.2px;top:541.42px;font-size:12.5px;font-weight:400;color:#6a6a6a;letter-spacing:0px;">Nabídková cena bez</div>
<div class="t" style="left:1281.2px;top:556.42px;font-size:12.5px;font-weight:400;color:#6a6a6a;letter-spacing:0px;">DPH</div>
<svg style="position:absolute;left:1425.5px;top:551px;" width="8" height="6" viewBox="0 0 8 6"><path d="M0.6 0.6H7.4L4 5.4z" fill="none" stroke="#555" stroke-width="1.05" stroke-linejoin="round"/></svg>
<div style="position:absolute;left:1443px;top:535px;width:126px;height:114px;overflow:hidden">
<div class="t" style="left:8.4px;top:10.62px;font-size:12.5px;font-weight:400;color:#6a6a6a;letter-spacing:0px;">Nabídková cena s DPH</div>
<div class="t" style="left:86.0px;top:45.65px;font-size:12.7px;font-weight:400;color:#000;letter-spacing:0px;-webkit-text-stroke:0.25px #000">4 235 000,00</div>
<div class="t" style="left:86.0px;top:70.65px;font-size:12.7px;font-weight:400;color:#000;letter-spacing:0px;-webkit-text-stroke:0.25px #000">5 445 000,00</div>
<div class="t" style="left:86.0px;top:95.65px;font-size:12.7px;font-weight:400;color:#000;letter-spacing:0px;-webkit-text-stroke:0.25px #000">7 260 000,00</div>
</div>
<svg style="position:absolute;left:359px;top:584px;" width="17" height="5" viewBox="0 0 17 5"><rect x="0.5" y="0.5" width="3" height="3.2" rx="0.9" fill="none" stroke="#1d6db0" stroke-width="1.05"/><rect x="6.5" y="0.5" width="3" height="3.2" rx="0.9" fill="none" stroke="#1d6db0" stroke-width="1.05"/><rect x="12.5" y="0.5" width="3" height="3.2" rx="0.9" fill="none" stroke="#1d6db0" stroke-width="1.05"/></svg>
<svg style="position:absolute;left:385px;top:578px;" width="16" height="16" viewBox="0 0 16 16"><circle cx="8" cy="8" r="7.3" fill="none" stroke="#1d6db0" stroke-width="1.2"/><path d="M7.4 7.2v3.6q0.1 1.4 1.5 1.9" fill="none" stroke="#1d6db0" stroke-width="1.2"/><circle cx="7.6" cy="4.7" r="0.75" fill="#1d6db0"/></svg>
<div class="t" style="left:421.0px;top:580.65px;font-size:12.7px;font-weight:400;color:#000;letter-spacing:0px;-webkit-text-stroke:0.25px #000">002</div>
<div class="t" style="left:491.2px;top:580.61px;font-size:12.75px;font-weight:400;color:#000;letter-spacing:0px;-webkit-text-stroke:0.25px #000">Dodavatel - školení 3</div>
<div class="t" style="left:821.0px;top:580.65px;font-size:12.7px;font-weight:400;color:#000;letter-spacing:0px;-webkit-text-stroke:0.25px #000">12345678</div>
<div class="t" style="left:921.0px;top:580.65px;font-size:12.7px;font-weight:400;color:#000;letter-spacing:0px;-webkit-text-stroke:0.25px #000">16. 5. 2025 10:20</div>
<div class="t" style="right:772.7px;top:580.65px;font-size:12.7px;font-weight:400;color:#000;letter-spacing:0px;-webkit-text-stroke:0.25px #000">1</div>
<div class="t" style="right:642.3px;top:580.65px;font-size:12.7px;font-weight:400;color:#000;letter-spacing:0px;-webkit-text-stroke:0.25px #000">92,05882353</div>
<div class="t" style="right:472.3px;top:580.65px;font-size:12.7px;font-weight:400;color:#000;letter-spacing:0px;-webkit-text-stroke:0.25px #000">3 500 000,00</div>
<svg style="position:absolute;left:359px;top:609px;" width="17" height="5" viewBox="0 0 17 5"><rect x="0.5" y="0.5" width="3" height="3.2" rx="0.9" fill="none" stroke="#1d6db0" stroke-width="1.05"/><rect x="6.5" y="0.5" width="3" height="3.2" rx="0.9" fill="none" stroke="#1d6db0" stroke-width="1.05"/><rect x="12.5" y="0.5" width="3" height="3.2" rx="0.9" fill="none" stroke="#1d6db0" stroke-width="1.05"/></svg>
<svg style="position:absolute;left:385px;top:603px;" width="16" height="16" viewBox="0 0 16 16"><circle cx="8" cy="8" r="7.3" fill="none" stroke="#1d6db0" stroke-width="1.2"/><path d="M7.4 7.2v3.6q0.1 1.4 1.5 1.9" fill="none" stroke="#1d6db0" stroke-width="1.2"/><circle cx="7.6" cy="4.7" r="0.75" fill="#1d6db0"/></svg>
<div class="t" style="left:421.0px;top:605.65px;font-size:12.7px;font-weight:400;color:#000;letter-spacing:0px;-webkit-text-stroke:0.25px #000">001</div>
<div class="t" style="left:491.2px;top:605.61px;font-size:12.75px;font-weight:400;color:#000;letter-spacing:0px;-webkit-text-stroke:0.25px #000">Dodavatel - školení 2</div>
<div class="t" style="left:821.0px;top:605.65px;font-size:12.7px;font-weight:400;color:#000;letter-spacing:0px;-webkit-text-stroke:0.25px #000">12345678</div>
<div class="t" style="left:921.0px;top:605.65px;font-size:12.7px;font-weight:400;color:#000;letter-spacing:0px;-webkit-text-stroke:0.25px #000">16. 5. 2025 10:18</div>
<div class="t" style="right:772.7px;top:605.65px;font-size:12.7px;font-weight:400;color:#000;letter-spacing:0px;-webkit-text-stroke:0.25px #000">2</div>
<div class="t" style="right:642.3px;top:605.65px;font-size:12.7px;font-weight:400;color:#000;letter-spacing:0px;-webkit-text-stroke:0.25px #000">82,638888889</div>
<div class="t" style="right:472.3px;top:605.65px;font-size:12.7px;font-weight:400;color:#000;letter-spacing:0px;-webkit-text-stroke:0.25px #000">4 500 000,00</div>
<svg style="position:absolute;left:359px;top:634px;" width="17" height="5" viewBox="0 0 17 5"><rect x="0.5" y="0.5" width="3" height="3.2" rx="0.9" fill="none" stroke="#1d6db0" stroke-width="1.05"/><rect x="6.5" y="0.5" width="3" height="3.2" rx="0.9" fill="none" stroke="#1d6db0" stroke-width="1.05"/><rect x="12.5" y="0.5" width="3" height="3.2" rx="0.9" fill="none" stroke="#1d6db0" stroke-width="1.05"/></svg>
<svg style="position:absolute;left:385px;top:628px;" width="16" height="16" viewBox="0 0 16 16"><circle cx="8" cy="8" r="7.3" fill="none" stroke="#1d6db0" stroke-width="1.2"/><path d="M7.4 7.2v3.6q0.1 1.4 1.5 1.9" fill="none" stroke="#1d6db0" stroke-width="1.2"/><circle cx="7.6" cy="4.7" r="0.75" fill="#1d6db0"/></svg>
<div class="t" style="left:421.0px;top:630.65px;font-size:12.7px;font-weight:400;color:#000;letter-spacing:0px;-webkit-text-stroke:0.25px #000">003</div>
<div class="t" style="left:491.2px;top:630.61px;font-size:12.75px;font-weight:400;color:#000;letter-spacing:0px;-webkit-text-stroke:0.25px #000">Dodavatel - školení 4</div>
<div class="t" style="left:821.0px;top:630.65px;font-size:12.7px;font-weight:400;color:#000;letter-spacing:0px;-webkit-text-stroke:0.25px #000">12345678</div>
<div class="t" style="left:921.0px;top:630.65px;font-size:12.7px;font-weight:400;color:#000;letter-spacing:0px;-webkit-text-stroke:0.25px #000">16. 5. 2025 10:23</div>
<div class="t" style="right:772.7px;top:630.65px;font-size:12.7px;font-weight:400;color:#000;letter-spacing:0px;-webkit-text-stroke:0.25px #000">3</div>
<div class="t" style="right:642.3px;top:630.65px;font-size:12.7px;font-weight:400;color:#000;letter-spacing:0px;-webkit-text-stroke:0.25px #000">69,166666667</div>
<div class="t" style="right:472.3px;top:630.65px;font-size:12.7px;font-weight:400;color:#000;letter-spacing:0px;-webkit-text-stroke:0.25px #000">6 000 000,00</div>
<div style="position:absolute;left:1523px;top:535px;width:46px;height:114px;background:linear-gradient(to right, rgba(0,0,0,0), rgba(0,0,0,0.02) 50%, rgba(0,0,0,0.11))"></div>
<div class="t" style="left:777.3px;top:674.40px;width:438.5px;font-size:13px;letter-spacing:-0.1px;font-weight:400;color:#575757;-webkit-text-stroke:0.3px #575757;text-align:justify;text-align-last:justify;white-space:normal;height:16px;overflow:hidden">Podle § 50 ve spojení s § 53 odst. 5 ZZVZ je zadavatel povinen odeslat bez</div>
<div class="t" style="left:777.3px;top:689.40px;width:438.5px;font-size:13px;letter-spacing:-0.1px;font-weight:400;color:#575757;-webkit-text-stroke:0.3px #575757;text-align:justify;text-align-last:justify;white-space:normal;height:16px;overflow:hidden">zbytečného odkladu po ukončení hodnocení nabídek nebo elektronické</div>
<div class="t" style="left:777.3px;top:704.40px;width:438.5px;font-size:13px;letter-spacing:-0.1px;font-weight:400;color:#575757;-webkit-text-stroke:0.3px #575757;text-align:justify;text-align-last:justify;white-space:normal;height:16px;overflow:hidden">aukce, pokud byla použita, oznámení o výběru všem účastníkům zadávacího</div>
<div class="t" style="left:777.3px;top:719.40px;width:438.5px;font-size:13px;letter-spacing:-0.1px;font-weight:400;color:#575757;-webkit-text-stroke:0.3px #575757;text-align:justify;text-align-last:justify;white-space:normal;height:16px;overflow:hidden">řízení nebo oznámení o výběru dodavatele uveřejnit na profilu zadavatele,</div>
<div class="t" style="left:777.3px;top:734.40px;font-size:13px;font-weight:400;color:#575757;letter-spacing:-0.111px;-webkit-text-stroke:0.3px #575757">pokud si takový postup zadavatel vyhradil v zadávací dokumentaci.</div>
<div style="position:absolute;left:776px;top:844px;width:440px;height:19px;border:1px solid #e0101c;box-sizing:border-box"></div>
<div class="t" style="left:596.0px;width:800px;text-align:center;top:847.12px;font-size:12.5px;font-weight:400;color:#1d6db0;letter-spacing:0px;">Hodnocení ukončeno, založit E-aukci</div>
<div style="position:absolute;left:777px;top:882px;width:438px;height:20px;background:#e2e2e2;border-radius:5px"></div>
<div class="t" style="left:596.0px;width:800px;text-align:center;top:886.72px;font-size:12.5px;font-weight:400;color:#8a8a8a;letter-spacing:0px;">Vstup do specifikace E-aukce</div>
<div style="position:absolute;left:777px;top:922px;width:438px;height:20px;background:#e2e2e2;border-radius:5px"></div>
<div class="t" style="left:596.0px;width:800px;text-align:center;top:926.72px;font-size:12.5px;font-weight:400;color:#8a8a8a;letter-spacing:0px;">Vstoupit do aukční síně</div>
</body></html>
